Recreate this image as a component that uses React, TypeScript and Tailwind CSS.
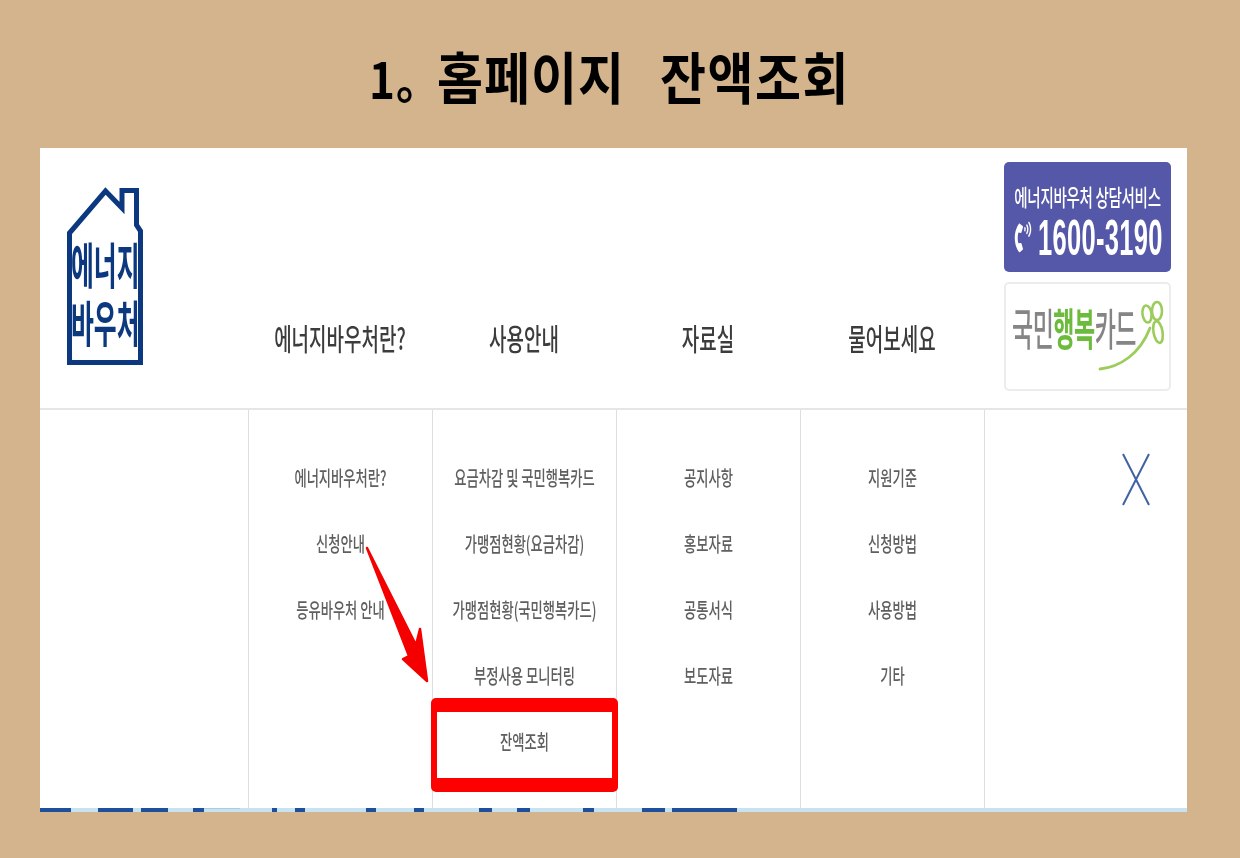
import { FaPhoneVolume } from "react-icons/fa";

const KR = "font-['Noto_Sans_CJK_KR','Noto_Sans',sans-serif]";

const columns = [
  ["에너지바우처란?", "신청안내", "등유바우처 안내"],
  ["요금차감 및 국민행복카드", "가맹점현황(요금차감)", "가맹점현황(국민행복카드)", "부정사용 모니터링", "잔액조회"],
  ["공지사항", "홍보자료", "공통서식", "보도자료"],
  ["지원기준", "신청방법", "사용방법", "기타"],
];
const nav = ["에너지바우처란?", "사용안내", "자료실", "물어보세요"];
const strip: [number, number, string][] = [
  [0, 31, "#1d4f9c"], [58, 35, "#1d4f9c"], [101, 27, "#1d4f9c"], [153, 11, "#1d4f9c"], [164, 36, "#a9cbe4"],
  [232, 5, "#1d4f9c"], [255, 10, "#1d4f9c"], [326, 10, "#1d4f9c"], [374, 10, "#1d4f9c"], [439, 13, "#1d4f9c"],
  [477, 13, "#1d4f9c"], [543, 11, "#1d4f9c"], [602, 23, "#1d4f9c"], [632, 65, "#1d4f9c"],
];

function Logo() {
  return (
    <div className="relative h-[179px] w-[78px]">
      <svg width="78" height="179" viewBox="0 0 78 179" className="block">
        <path d="M3.5 175.5V46L39.5 4L56 21V3.5H70.5V38L74.5 44V175.5Z" fill="none" stroke="#0c3880" strokeWidth="5" strokeLinejoin="miter" />
        <path d="M1 173H77V178H1Z" fill="#0c3880" />
      </svg>
      <div className="absolute left-[5px] top-[50px] flex w-[68px] flex-col items-center text-[#0c3880]">
        <span className="h-[30px] origin-top scale-x-[0.92] scale-y-[1.82] text-[27px] leading-[30px] font-bold whitespace-nowrap">에너지</span>
        <span className="mt-[28px] h-[30px] origin-top scale-x-[0.92] scale-y-[1.82] text-[27px] leading-[30px] font-bold whitespace-nowrap">바우처</span>
      </div>
    </div>
  );
}

function Clover() {
  return (
    <svg width="70" height="80" viewBox="0 0 70 80" className="absolute left-[92px] top-[14px]">
      <path d="M2 71C22 69 42 56 52 30" fill="none" stroke="#9ccc5a" strokeWidth="2.8" strokeLinecap="round" />
      <g fill="none" stroke="#9ccc5a" strokeWidth="2.6">
        <ellipse cx="49" cy="16" rx="4.5" ry="8.5" transform="rotate(-8 49 16)" />
        <ellipse cx="59" cy="13" rx="5" ry="9" />
        <ellipse cx="60" cy="34" rx="4.5" ry="11" transform="rotate(-10 60 34)" />
      </g>
    </svg>
  );
}

export default function App() {
  return (
    <div className={`h-[858px] w-[1240px] overflow-hidden bg-[#d4b48c] ${KR}`}>
      <div className="flex h-[148px] items-start pl-[369px] pt-[42px] text-black">
        <h1 className="flex scale-y-[1.12] items-baseline text-[50px] leading-[66px] font-bold whitespace-nowrap">
          <span className="w-[68px] text-[44px] tracking-[1px]">1。</span>
          <span className="w-[223px] tracking-[1px]">홈페이지</span>
          <span className="tracking-[1.5px]">잔액조회</span>
        </h1>
      </div>
      <div className="ml-[40px] flex h-[664px] w-[1147px] flex-col bg-white">
        <header className="flex h-[262px] border-b-2 border-[#e6e6e6]">
          <div className="w-[208px] pl-[26px] pt-[39px]">
            <Logo />
          </div>
          {nav.map((n) => (
            <div key={n} className="flex w-[184px] justify-center pt-[173px]">
              <span className="inline-block h-[34px] scale-y-[1.55] text-[19px] leading-[34px] font-medium whitespace-nowrap text-[#3c3c3c]">{n}</span>
            </div>
          ))}
          <div className="flex flex-1 flex-col gap-[10px] pl-[20px] pr-[16px] pt-[14px]">
            <div className="flex h-[110px] flex-col items-center overflow-hidden rounded-[5px] bg-[#5558a8] pt-[25px] text-white">
              <span className="inline-block h-[18px] scale-y-[1.6] text-[14.5px] leading-[18px] font-medium whitespace-nowrap tracking-[-0.3px]">에너지바우처 상담서비스</span>
              <div className="mt-[17px] flex w-full items-center pl-[8px]">
                <FaPhoneVolume className="size-[22px] shrink-0 scale-y-[1.4]" />
                <span className="ml-[4px] inline-block h-[30px] scale-y-[1.95] font-['Liberation_Sans',sans-serif] text-[25.5px] leading-[30px] font-bold whitespace-nowrap tracking-[0.3px]">1600-3190</span>
              </div>
            </div>
            <div className="relative flex h-[109px] rounded-[5px] border-2 border-[#ececec] pl-[6px] pt-[27px]">
              <span className="inline-block h-[30px] scale-y-[1.95] text-[23px] leading-[30px] font-medium whitespace-nowrap tracking-[-0.5px] text-[#858585]">
                국민<span className="font-bold text-[#6cbb3c]">행복</span>카드
              </span>
              <Clover />
            </div>
          </div>
        </header>
        <main className="flex h-[398px]">
          <div className="w-[209px] border-r border-[#dedede]" />
          {columns.map((col, i) => (
            <div key={i} className="relative flex w-[184px] flex-col items-center border-r border-[#dedede] pt-[35px]">
              {col.map((t) => (
                <div key={t} className="flex h-[66px] items-center">
                  <span className="inline-block scale-y-[1.55] text-[13.3px] leading-[20px] font-medium whitespace-nowrap text-[#5f5f5f] blur-[0.3px]">{t}</span>
                </div>
              ))}
              {i === 1 && (
                <div className="absolute left-[-2px] top-[288px] h-[94px] w-[187px] rounded-[5px] border-x-[6px] border-y-[14px] border-[#ff0000]" />
              )}
            </div>
          ))}
          <div className="flex-1 pl-[136px] pt-[43px]">
            <svg width="30" height="54" viewBox="0 0 30 54">
              <path d="M2 1L28 52M28 1L2 52" fill="none" stroke="#3f63a3" strokeWidth="2" />
            </svg>
          </div>
        </main>
        <svg width="1147" height="4" viewBox="0 0 1147 4" className="block bg-[#c7e3f2]">
          {strip.map(([x, w, c]) => (
            <rect key={x} x={x} y="0" width={w} height={c === "#a9cbe4" ? 1 : 4} fill={c} />
          ))}
        </svg>
      </div>
      <svg width="70" height="140" viewBox="0 0 70 140" className="absolute left-[362px] top-[546px]">
        <path d="M5 2L54 99L58 83L65 135L41 113L47 110Z" fill="#f40000" stroke="#f40000" strokeWidth="2.5" strokeLinejoin="round" />
      </svg>
    </div>
  );
}
